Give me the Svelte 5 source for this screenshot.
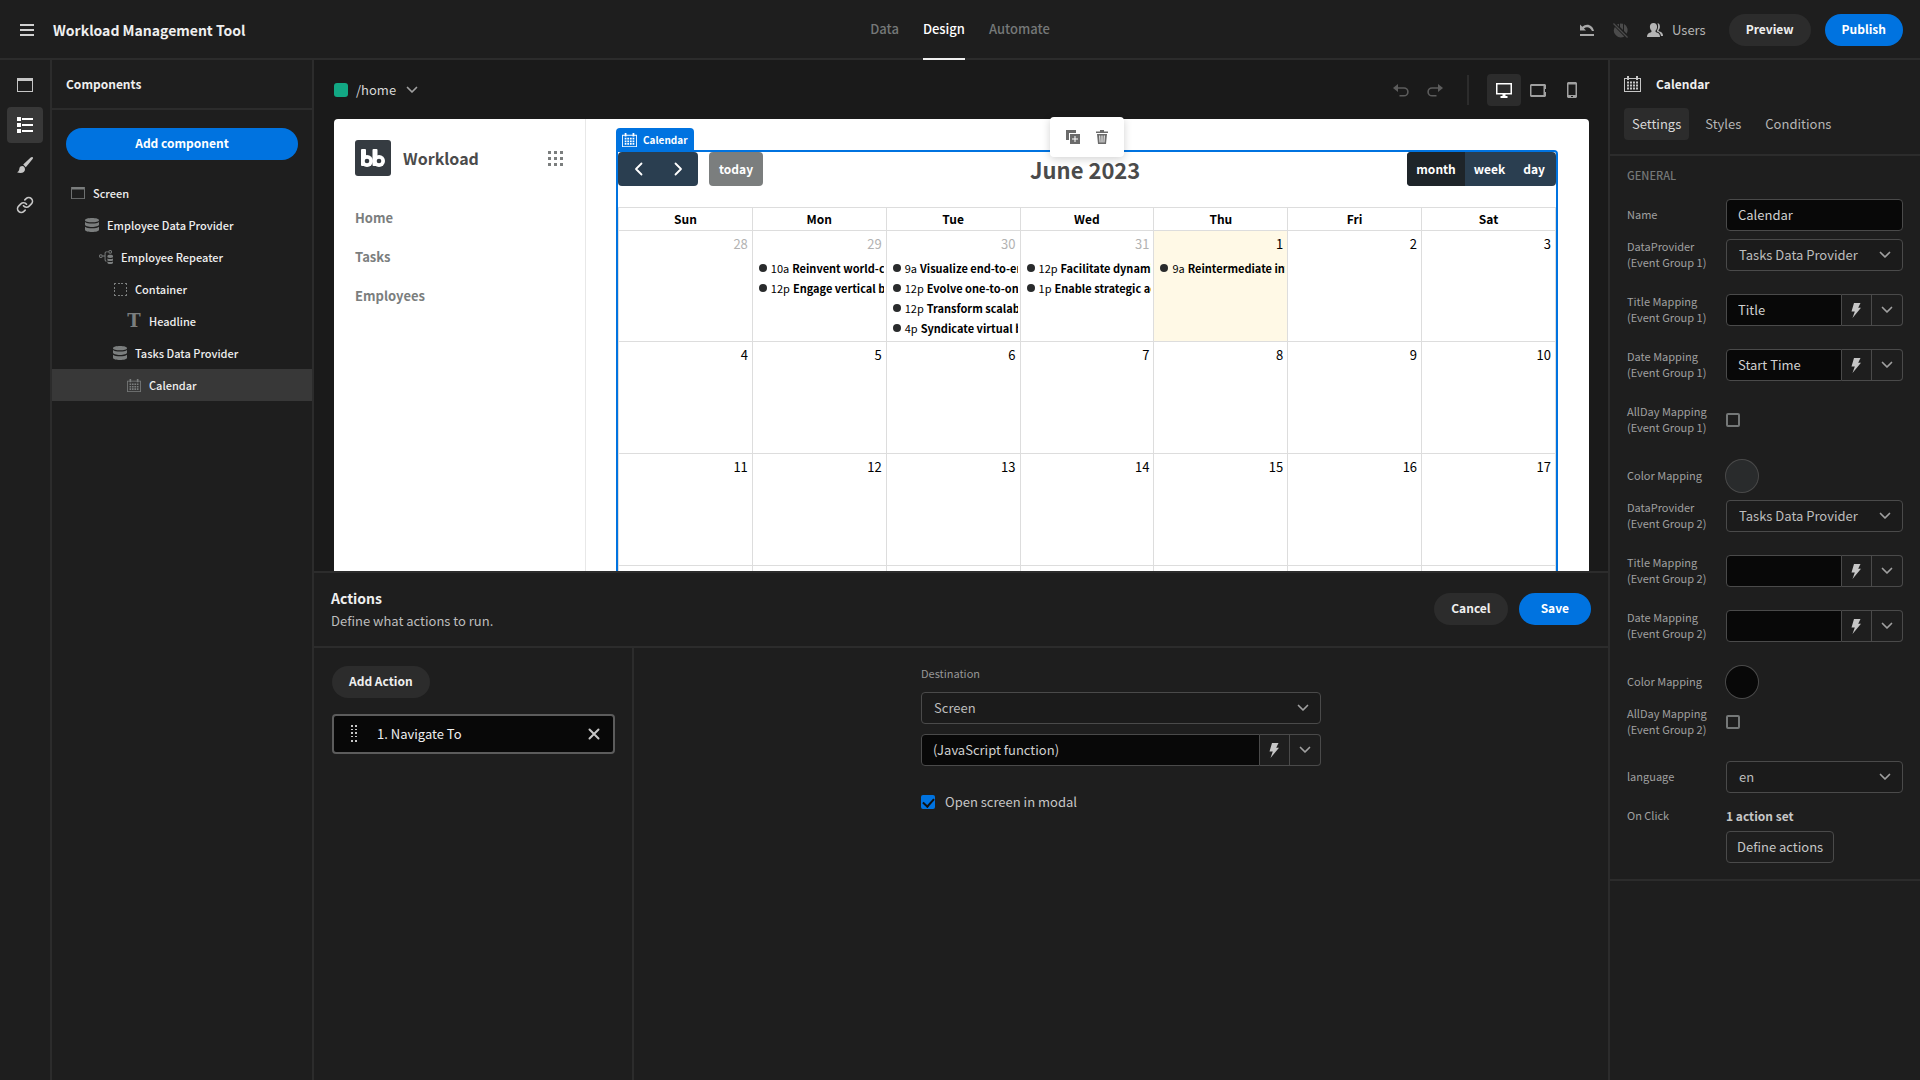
<script lang="ts">
  type Glyph = { w: number; h: number; d: string; stroke?: number };

  const glyphs: Record<string, Glyph> = {
    menu: { w: 14, h: 12, d: "M0 0h14v2H0zM0 5h14v2H0zM0 10h14v2H0z" },
    page: { w: 16, h: 14, d: "M0 0h16v14H0zM1 3v10h14V3z" },
    list: {
      w: 16,
      h: 16,
      d: "M0 0h4v4H0zM5 1h11v2H5zM0 6h4v4H0zM5 7h11v2H5zM0 12h4v4H0zM5 13h11v2H5z",
    },
    brush: {
      w: 16,
      h: 16,
      d: "M15.7.3c-.5-.5-1.3-.3-2 .2L6.2 7.6l2.6 2.6 6.6-7.9c.5-.7.8-1.5.3-2zM5.3 9.1c-1.8 0-2.9 1.3-3 3C2.2 13.7 1.4 14.8 0 15.3c1 .5 2.3.7 3.4.7 2.9 0 4.6-1.7 4.6-3.6 0-1.8-1.2-3.3-2.7-3.3z",
    },
    link: {
      w: 24,
      h: 24,
      stroke: 2.2,
      d: "M10 13a5 5 0 0 0 7.54.54l3-3a5 5 0 0 0-7.07-7.07l-1.72 1.71M14 11a5 5 0 0 0-7.54-.54l-3 3a5 5 0 0 0 7.07 7.07l1.71-1.71",
    },
    data: {
      w: 14,
      h: 14,
      d: "M7 0c3.9 0 7 .9 7 2.2S10.9 4.3 7 4.3 0 3.5 0 2.2 3.1 0 7 0zM0 4c1.2 1 4 1.5 7 1.5S12.8 5 14 4v2.8c0 1.2-3.1 2.2-7 2.2s-7-1-7-2.2zM0 8.7c1.2 1 4 1.5 7 1.5s5.8-.5 7-1.5v3c0 1.3-3.1 2.3-7 2.3s-7-1-7-2.3z",
    },
    repeater: {
      w: 15,
      h: 15,
      d: "M2 4.5a2 2 0 1 1 0 4 2 2 0 0 1 0-4zM2 5.5a1 1 0 1 0 0 2 1 1 0 0 0 0-2zM4 6h2V3.5C6 2.1 6.9 1.5 8 1.5h2v1H8c-.7 0-1 .3-1 1v7c0 .7.3 1 1 1v1c-1.1 0-2-.6-2-2V7H4zM12 0a2 2 0 1 1 0 4 2 2 0 0 1 0-4zM12 1a1 1 0 1 0 0 2 1 1 0 0 0 0-2zM9 6.5C9 5.7 10.3 5.2 12 5.2s3 .5 3 1.3v1.3c-1.5.9-4.5.9-6 0zM9 9c1.5.9 4.5.9 6 0v2.2c-1.5.9-4.5.9-6 0zM9 12.3c1.5.9 4.5.9 6 0v1.4c0 .8-1.3 1.3-3 1.3s-3-.5-3-1.3z",
    },
    container: {
      w: 13,
      h: 13,
      d: "M0 0h2v1H1v1H0zM4 0h2v1H4zM7 0h2v1H7zM11 0h2v2h-1V1h-1zM0 4h1v2H0zM0 7h1v2H0zM12 4h1v2h-1zM12 7h1v2h-1zM0 11h1v1h1v1H0zM4 12h2v1H4zM7 12h2v1H7zM12 11h1v2h-2v-1h1z",
    },
    calendar: {
      w: 17,
      h: 16,
      d: "M0 2h3V0h2v2h7V0h2v2h3v14H0zM1 3v12h15V3h-2v1h-2V3H5v1H3V3zM3 5.5h2v2H3zM6 5.5h2v2H6zM9 5.5h2v2H9zM12 5.5h2v2h-2zM3 8.5h2v2H3zM6 8.5h2v2H6zM9 8.5h2v2H9zM12 8.5h2v2h-2zM3 11.5h2v2H3zM6 11.5h2v2H6zM9 11.5h2v2H9zM12 11.5h2v2h-2z",
    },
    revert: {
      w: 14,
      h: 12,
      d: "M0 .5v6h6L3.9 4.4C6.6 2.2 10.4 3 12 7h2C12.9.9 6.5-1.4 2.3 2.8zM0 10h14v2H0z",
    },
    globeOff: {
      w: 15,
      h: 15,
      d: "M1.9 3.9l9.4 9.5A6.9 6.9 0 0 1 1.9 3.9zM4 1.6l2-.9v3zM7 .5l3 .2v6.4L7 4.1zM11 1.1a6.9 6.9 0 0 1 2.6 9.6L11 8.1zM0 .9L.9 0 15 14.1l-.9.9z",
    },
    users: {
      w: 16,
      h: 14,
      d: "M6.5 0c2.3 0 3.6 1.6 3.6 3.8 0 1.8-.8 3.3-1.6 4-.2.9.2 1.4 1.2 1.7 2.2.7 3.3 1.8 3.3 4.5H0c0-2.7 1.2-3.8 3.4-4.5 1-.3 1.3-.8 1.1-1.7-.8-.7-1.6-2.2-1.6-4C2.9 1.6 4.2 0 6.5 0zM10.5.2C12.2.3 13 1.8 12.9 3.7c0 1.6-.6 2.7-1.3 3.4-.2.9.1 1.3.9 1.5 2.3.7 3.5 1.7 3.5 4.4h-2c-.3-2.5-1.5-3.7-3.6-4.3-.5-.2-.7-.5-.6-1 1.5-2 1.7-5.5.7-7.5z",
    },
    desktop: {
      w: 16,
      h: 15,
      d: "M0 0h16v11.5H0zM1.5 1.5V10h13V1.5zM6.5 11.5h3V13h2v2h-7v-2h2z",
    },
    tablet: {
      w: 16,
      h: 13,
      d: "M1 0h14l1 1v4h-1v3h1v4l-1 1H1l-1-1V1zM1.5 2v9h12V2z",
    },
    phone: { w: 10, h: 16, d: "M1 0h8l1 1v14l-1 1H1l-1-1V1zM1.5 2.5V13h7V2.5zM4 14h2v1H4z" },
    undo: {
      w: 16,
      h: 13,
      d: "M5 0v3.2h6a4.7 4.7 0 0 1 0 9.4H6.5V11H11a3.1 3.1 0 0 0 0-6.2H5V8L0 4z",
    },
    redo: {
      w: 16,
      h: 13,
      d: "M11 0v3.2H5a4.7 4.7 0 0 0 0 9.4h4.5V11H5a3.1 3.1 0 0 1 0-6.2h6V8l5-4z",
    },
    duplicate: {
      w: 14,
      h: 14,
      d: "M0 0h10v3H3v7H0zM4 4h10v10H4zM8.5 6v2.5H6v1h2.5V12h1V9.5H12v-1H9.5V6z",
    },
    trash: {
      w: 12,
      h: 14,
      d: "M4 0h4v1.5h4V3H0V1.5h4zM1 4h10l-1 10H2zM3.2 5.5l.4 7h.9l-.3-7zM5.5 5.5v7h1v-7zM7.8 5.5l-.3 7h.9l.4-7z",
    },
    bolt: { w: 10, h: 15, d: "M3 0h6.5L7.2 4.8H10L1.5 15l2.3-6.5H.5z" },
    chevron: { w: 12, h: 8, stroke: 1.7, d: "M1.5 1.5L6 6l4.5-4.5" },
    left: { w: 9, h: 14, stroke: 1.8, d: "M7.5 1.5L2 7l5.5 5.5" },
    right: { w: 9, h: 14, stroke: 1.8, d: "M1.5 1.5L7 7l-5.5 5.5" },
    close: { w: 12, h: 12, stroke: 2, d: "M1.5 1.5l9 9M10.5 1.5l-9 9" },
    grip: {
      w: 6,
      h: 18,
      d: "M0 0h2v2H0zM4 0h2v2H4zM0 4h2v1H0zM4 4h2v1H4zM0 7h2v2H0zM4 7h2v2H4zM0 11h2v1H0zM4 11h2v1H4zM0 15h2v2H0zM4 15h2v2H4z",
    },
    apps: {
      w: 15,
      h: 15,
      d: "M0 0h3v3H0zM6 0h3v3H6zM12 0h3v3h-3zM0 6h3v3H0zM6 6h3v3H6zM12 6h3v3h-3zM0 12h3v3H0zM6 12h3v3H6zM12 12h3v3h-3z",
    },
  };

  const rail = [
    { icon: "page", label: "Screens", size: 16 },
    { icon: "list", label: "Components", size: 16 },
    { icon: "brush", label: "Theme", size: 16 },
    { icon: "link", label: "Navigation", size: 18 },
  ];

  const tree = [
    { label: "Screen", icon: "page", depth: 0 },
    { label: "Employee Data Provider", icon: "data", depth: 1 },
    { label: "Employee Repeater", icon: "repeater", depth: 2 },
    { label: "Container", icon: "container", depth: 3 },
    { label: "Headline", icon: "headline", depth: 4 },
    { label: "Tasks Data Provider", icon: "data", depth: 3 },
    { label: "Calendar", icon: "calendar", depth: 4 },
  ];

  const weekdays = ["Sun", "Mon", "Tue", "Wed", "Thu", "Fri", "Sat"];
  // 0 leaves a cell empty
  const weeks = [
    [28, 29, 30, 31, 1, 2, 3],
    [4, 5, 6, 7, 8, 9, 10],
    [11, 12, 13, 14, 15, 16, 17],
    [0, 0, 0, 0, 0, 0, 0],
  ];
  // events of the first week, by day number
  const events: Record<number, [string, string][]> = {
    29: [
      ["10a", "Reinvent world-class"],
      ["12p", "Engage vertical bandwidth"],
    ],
    30: [
      ["9a", "Visualize end-to-end"],
      ["12p", "Evolve one-to-one"],
      ["12p", "Transform scalable"],
      ["4p", "Syndicate virtual bandwidth"],
    ],
    31: [
      ["12p", "Facilitate dynamic"],
      ["1p", "Enable strategic action"],
    ],
    1: [["9a", "Reintermediate integrated"]],
  };

  type Setting = { id: string; kind: string; label: string; group?: number; value?: string };
  const settings: Setting[] = [
    { id: "name", kind: "text", label: "Name", value: "Calendar" },
    { id: "provider1", kind: "select", label: "DataProvider", group: 1, value: "Tasks Data Provider" },
    { id: "title1", kind: "binding", label: "Title Mapping", group: 1, value: "Title" },
    { id: "date1", kind: "binding", label: "Date Mapping", group: 1, value: "Start Time" },
    { id: "allday1", kind: "check", label: "AllDay Mapping", group: 1 },
    { id: "color1", kind: "color", label: "Color Mapping", value: "#292b2c" },
    { id: "provider2", kind: "select", label: "DataProvider", group: 2, value: "Tasks Data Provider" },
    { id: "title2", kind: "binding", label: "Title Mapping", group: 2, value: "" },
    { id: "date2", kind: "binding", label: "Date Mapping", group: 2, value: "" },
    { id: "color2", kind: "color", label: "Color Mapping", value: "#080808" },
    { id: "allday2", kind: "check", label: "AllDay Mapping", group: 2 },
    { id: "language", kind: "select", label: "language", value: "en" },
  ];

  let activeRail = $state("list");
  let selected = $state("Calendar");
  let device = $state("desktop");
  let tab = $state("Settings");
  let openInModal = $state(true);
</script>

{#snippet icon(name: string, size?: number)}
  {@const g = glyphs[name]}
  {@const w = size ?? g.w}
  <svg
    class="icon"
    class:line={g.stroke}
    width={w}
    height={Math.round((w * g.h) / g.w)}
    viewBox="0 0 {g.w} {g.h}"
    aria-hidden="true"
  >
    <path d={g.d} fill-rule="evenodd" stroke-width={g.stroke ?? 0} />
  </svg>
{/snippet}

{#snippet picker(id: string, value: string)}
  <div class="picker">
    <select {id}>
      <option>{value}</option>
    </select>
    {@render icon("chevron")}
  </div>
{/snippet}

{#snippet binding(id: string, value: string, label?: string)}
  <div class="binding">
    <input {id} type="text" {value} aria-label={label} />
    <button type="button" aria-label="Open bindings">{@render icon("bolt")}</button>
    <button type="button" aria-label="Show options">{@render icon("chevron")}</button>
  </div>
{/snippet}

<div class="app">
  <header class="top">
    <div class="top-left">
      <button type="button" aria-label="Menu">{@render icon("menu")}</button>
      <h1>Workload Management Tool</h1>
    </div>
    <nav class="top-tabs" aria-label="Sections">
      <a href="#data">Data</a>
      <a href="#design" class="active">Design</a>
      <a href="#automate">Automate</a>
    </nav>
    <div class="top-right">
      <button type="button" aria-label="Revert">{@render icon("revert")}</button>
      <button class="off" type="button" aria-label="Unpublish">{@render icon("globeOff")}</button>
      <button class="users" type="button">{@render icon("users")}Users</button>
      <div class="top-actions">
        <button class="pill" type="button">Preview</button>
        <button class="pill cta" type="button">Publish</button>
      </div>
    </div>
  </header>

  <div class="body">
    <nav class="rail" aria-label="Design">
      {#each rail as item (item.icon)}
        <button
          type="button"
          class:active={activeRail === item.icon}
          aria-label={item.label}
          onclick={() => (activeRail = item.icon)}
        >
          {@render icon(item.icon, item.size)}
        </button>
      {/each}
    </nav>

    <aside class="components">
      <h2>Components</h2>
      <button class="pill cta add" type="button">Add component</button>
      <ul>
        {#each tree as node}
          <li>
            <button
              type="button"
              class:selected={selected === node.label}
              style="padding-left: {18 + node.depth * 14}px"
              onclick={() => (selected = node.label)}
            >
              <span class="tree-icon">
                {#if node.icon === "headline"}
                  <svg class="icon" width="16" height="14" viewBox="0 0 16 14" aria-hidden="true">
                    <text x="8" y="13" text-anchor="middle">T</text>
                  </svg>
                {:else}
                  {@render icon(node.icon, node.icon === "container" ? 13 : 14)}
                {/if}
              </span>
              {node.label}
            </button>
          </li>
        {/each}
      </ul>
    </aside>

    <main>
      <div class="toolbar">
        <button class="route" type="button">
          <span class="role"></span>/home{@render icon("chevron")}
        </button>
        <div class="tools">
          <div class="history">
            <button type="button" aria-label="Undo">{@render icon("undo")}</button>
            <button type="button" aria-label="Redo">{@render icon("redo")}</button>
          </div>
          <div class="devices">
            {#each ["desktop", "tablet", "phone"] as name}
              <button
                type="button"
                class:active={device === name}
                aria-label={name}
                onclick={() => (device = name)}
              >
                {@render icon(name)}
              </button>
            {/each}
          </div>
        </div>
      </div>

      <div class="stage">
        <div class="canvas">
          <div class="side">
            <div class="brand">
              <svg class="logo" viewBox="0 0 36 36" aria-hidden="true">
                <rect width="36" height="36" rx="3" fill="#353b41" />
                <rect x="6" y="9" width="5" height="17" rx="1" />
                <rect x="17.5" y="9" width="5" height="17" rx="1" />
                <circle cx="12" cy="21" r="6" />
                <circle cx="24" cy="21" r="6" />
                <circle cx="12" cy="21" r="2.3" fill="#353b41" />
                <circle cx="24" cy="21" r="2.3" fill="#353b41" />
              </svg>
              <strong>Workload</strong>
              {@render icon("apps")}
            </div>
            <a href="#home">Home</a>
            <a href="#tasks">Tasks</a>
            <a href="#employees">Employees</a>
          </div>

          <div class="screen">
            <div class="selection">
              <span class="tag">{@render icon("calendar", 15)}Calendar</span>
              <div class="float">
                <button type="button" aria-label="Duplicate">{@render icon("duplicate")}</button>
                <button type="button" aria-label="Delete">{@render icon("trash")}</button>
              </div>
              <div class="cal-bar">
                <div class="cal-left">
                  <div class="group">
                    <button class="step" type="button" aria-label="Previous month">{@render icon("left")}</button>
                    <button class="step" type="button" aria-label="Next month">{@render icon("right")}</button>
                  </div>
                  <button class="today" type="button">today</button>
                </div>
                <h2>June 2023</h2>
                <div class="group views">
                  <button class="active" type="button">month</button>
                  <button type="button">week</button>
                  <button type="button">day</button>
                </div>
              </div>
              <table>
                <thead>
                  <tr>
                    {#each weekdays as day}<th scope="col">{day}</th>{/each}
                  </tr>
                </thead>
                <tbody>
                  {#each weeks as week, w}
                    <tr>
                      {#each week as day}
                        <td class:other={w === 0 && day > 7} class:now={w === 0 && day === 1}>
                          {#if day}<div class="num">{day}</div>{/if}
                          {#if w === 0 && events[day]}
                            {#each events[day] as [time, title]}
                              <div class="event"><i></i><span>{time}</span><b>{title}</b></div>
                            {/each}
                          {/if}
                        </td>
                      {/each}
                    </tr>
                  {/each}
                </tbody>
              </table>
            </div>
          </div>
        </div>
      </div>

      <section class="drawer" aria-labelledby="drawer-title">
        <header>
          <div>
            <h2 id="drawer-title">Actions</h2>
            <p>Define what actions to run.</p>
          </div>
          <div class="drawer-buttons">
            <button class="pill" type="button">Cancel</button>
            <button class="pill cta" type="button">Save</button>
          </div>
        </header>
        <div class="drawer-body">
          <div class="action-list">
            <button class="pill" type="button">Add Action</button>
            <div class="action">
              {@render icon("grip")}
              <span>1. Navigate To</span>
              <button type="button" aria-label="Remove action">{@render icon("close")}</button>
            </div>
          </div>
          <div class="action-form">
            <div class="form">
              <label for="destination">Destination</label>
              {@render picker("destination", "Screen")}
              {@render binding("url", "(JavaScript function)", "Screen URL")}
              <label class="check">
                <input type="checkbox" bind:checked={openInModal} />
                Open screen in modal
              </label>
            </div>
          </div>
        </div>
      </section>
    </main>

    <aside class="settings">
      <h2>{@render icon("calendar")}Calendar</h2>
      <div class="tabs" role="tablist">
        {#each ["Settings", "Styles", "Conditions"] as name}
          <button
            type="button"
            role="tab"
            aria-selected={tab === name}
            class:active={tab === name}
            onclick={() => (tab = name)}
          >
            {name}
          </button>
        {/each}
      </div>
      <div class="general">
        <h3>GENERAL</h3>
        {#each settings as s (s.id)}
          <div class="row" class:tall={s.group} class:swatch-row={s.kind === "color"}>
            <label for={s.id}>
              {s.label}{#if s.group}<br />(Event Group {s.group}){/if}
            </label>
            {#if s.kind === "text"}
              <input id={s.id} type="text" value={s.value} />
            {:else if s.kind === "select"}
              {@render picker(s.id, s.value ?? "")}
            {:else if s.kind === "binding"}
              {@render binding(s.id, s.value ?? "")}
            {:else if s.kind === "check"}
              <input id={s.id} type="checkbox" />
            {:else}
              <button id={s.id} class="swatch" type="button" aria-label={s.label} style="background: {s.value}"></button>
            {/if}
          </div>
        {/each}
        <div class="row">
          <label for="on-click">On Click</label>
          <strong>1 action set</strong>
          <button id="on-click" class="define" type="button">Define actions</button>
        </div>
      </div>
    </aside>
  </div>
</div>

<style>
  :global(body) {
    background: #1e1e1e;
  }
  .app {
    --bg: #1e1e1e;
    --deep: #1a1a1a;
    --line: #2c2c2c;
    --field: #080808;
    --edge: #4a4a4a;
    --blue: #0073e0;
    display: flex;
    flex-direction: column;
    height: 100vh;
    background: var(--bg);
    color: #efefef;
    font-family: "Noto Sans CJK SC", "Source Sans Pro", sans-serif;
    font-size: 13px;
    line-height: 16px;
  }
  .app * {
    box-sizing: border-box;
  }
  button,
  input,
  select {
    margin: 0;
    color: inherit;
    font: inherit;
  }
  button {
    display: flex;
    align-items: center;
    justify-content: center;
    padding: 0;
    border: 0;
    background: none;
    cursor: pointer;
  }
  h1,
  h2,
  h3,
  p,
  ul {
    margin: 0;
    padding: 0;
  }
  a {
    color: inherit;
    text-decoration: none;
  }
  .icon {
    display: block;
    flex: none;
    fill: currentColor;
  }
  .icon.line {
    fill: none;
    stroke: currentColor;
    stroke-linecap: round;
    stroke-linejoin: round;
  }
  .pill {
    height: 32px;
    padding: 0 17px 2px;
    border-radius: 16px;
    background: #2c2c2c;
    font-size: 12px;
    font-weight: 700;
  }
  .pill.cta {
    background: var(--blue);
    color: #fff;
  }

  .top {
    display: grid;
    grid-template-columns: 1fr auto 1fr;
    flex: none;
    height: 60px;
    border-bottom: 2px solid var(--line);
  }
  .top-left,
  .top-right,
  .top-actions {
    display: flex;
    align-items: center;
  }
  .top-left {
    gap: 19px;
    padding-left: 20px;
    color: #d0d0d0;
  }
  h1 {
    color: #efefef;
    font-size: 14px;
    font-weight: 700;
  }
  .top-tabs {
    display: flex;
    gap: 24px;
    color: #757878;
    font-weight: 500;
  }
  .top-tabs a {
    display: flex;
    align-items: center;
    height: 60px;
    border-bottom: 2px solid transparent;
  }
  .top-tabs .active {
    border-color: #efefef;
    color: #fff;
  }
  .top-right {
    justify-content: flex-end;
    gap: 19px;
    padding-right: 17px;
    color: #a8a8a8;
  }
  .off {
    color: #4b4b4b;
  }
  .users {
    gap: 9px;
    color: #b5b5b5;
  }
  .top-actions {
    gap: 14px;
    padding-left: 4px;
    color: #efefef;
  }

  .body {
    display: flex;
    flex: 1;
    min-height: 0;
  }
  .rail {
    display: flex;
    flex: none;
    flex-direction: column;
    align-items: center;
    gap: 4px;
    width: 52px;
    padding-top: 7px;
    border-right: 2px solid var(--line);
    color: #c6c6c6;
  }
  .rail button {
    width: 36px;
    height: 36px;
    border-radius: 4px;
  }
  .rail .active {
    background: #383838;
    color: #fff;
  }

  .components {
    flex: none;
    width: 262px;
    border-right: 2px solid var(--line);
  }
  .components h2 {
    height: 50px;
    padding: 16px 14px 0;
    border-bottom: 2px solid var(--line);
    font-size: 12px;
    font-weight: 700;
  }
  .add {
    width: calc(100% - 28px);
    margin: 18px 14px 17px;
  }
  .components ul {
    list-style: none;
  }
  .components li button {
    justify-content: flex-start;
    gap: 7px;
    width: 100%;
    height: 32px;
    font-size: 11px;
    font-weight: 500;
  }
  .components .selected {
    background: #383838;
  }
  .tree-icon {
    display: flex;
    justify-content: center;
    width: 16px;
    color: #7b7e7e;
  }
  .tree-icon .icon {
    overflow: visible;
  }
  .tree-icon text {
    font-family: "DejaVu Serif", serif;
    font-size: 18px;
    font-weight: 700;
  }

  main {
    display: flex;
    flex: 1;
    flex-direction: column;
    min-width: 0;
    background: var(--deep);
  }
  .toolbar {
    display: flex;
    flex: none;
    align-items: center;
    justify-content: space-between;
    height: 59px;
    padding: 1px 19px 0 20px;
  }
  .route {
    gap: 10px;
    color: #d8d8d8;
  }
  .route .icon {
    color: #a0a0a0;
  }
  .role {
    width: 14px;
    height: 14px;
    margin-right: -2px;
    border-radius: 3px;
    background: #12a884;
  }
  .tools,
  .devices,
  .history {
    display: flex;
    align-items: center;
  }
  .history {
    gap: 18px;
    height: 30px;
    margin-right: 18px;
    padding-right: 24px;
    border-right: 2px solid var(--line);
    color: #5c5c5c;
  }
  .devices {
    color: #a0a0a0;
  }
  .devices button {
    width: 34px;
    height: 32px;
    border-radius: 4px;
  }
  .devices .active {
    background: #2c2c2c;
    color: #fff;
  }

  .stage {
    flex: 1;
    min-height: 0;
    margin-top: -10px;
    padding: 10px 19px 0 20px;
    overflow: hidden;
  }
  .canvas {
    display: flex;
    height: 100%;
    border-radius: 4px 4px 0 0;
    background: #fff;
    color: #000;
  }
  .side {
    flex: none;
    width: 252px;
    padding: 21px 22px 21px 21px;
    border-right: 1px solid #e8e8e8;
    color: #7b7e7e;
  }
  .brand {
    display: flex;
    align-items: center;
    margin-bottom: 34px;
  }
  .brand strong {
    flex: 1;
    padding-left: 12px;
    color: #4b4b4b;
    font-size: 16px;
    font-weight: 700;
    line-height: 24px;
  }
  .logo {
    width: 36px;
    height: 36px;
    fill: #fff;
  }
  .side a {
    display: block;
    margin-bottom: 23px;
    font-weight: 700;
  }
  .screen {
    flex: 1;
    min-width: 0;
    padding: 31px 31px 0 30px;
  }
  .selection {
    position: relative;
    height: 560px;
    border: 2px solid var(--blue);
    border-radius: 0 4px 0 0;
  }
  .tag {
    position: absolute;
    top: -24px;
    left: -2px;
    display: flex;
    align-items: center;
    gap: 6px;
    height: 24px;
    padding: 0 6px;
    border-radius: 4px 4px 0 0;
    background: var(--blue);
    color: #fff;
    font-size: 10px;
    font-weight: 700;
  }
  .float {
    position: absolute;
    top: -35px;
    left: calc(50% - 37px);
    display: flex;
    align-items: center;
    justify-content: center;
    gap: 16px;
    width: 74px;
    height: 40px;
    border-radius: 4px;
    background: #fff;
    box-shadow: 0 2px 8px rgb(0 0 0 / 18%);
    color: #6b6b6b;
  }
  .cal-bar {
    display: flex;
    align-items: center;
    justify-content: space-between;
    margin-bottom: 21px;
    color: #fff;
  }
  .cal-left {
    display: flex;
    gap: 11px;
  }
  .cal-bar h2 {
    color: #4b4b4b;
    font-size: 22px;
    font-weight: 700;
    line-height: 34px;
  }
  .group {
    display: flex;
    overflow: hidden;
    border-radius: 4px;
    background: #2a3e50;
  }
  .cal-bar button {
    height: 34px;
    padding: 0 9px;
    font-size: 12px;
    font-weight: 700;
  }
  .cal-bar .views button:last-child {
    padding-right: 11px;
  }
  .cal-bar .step {
    width: 40px;
  }
  .cal-bar .active {
    background: #1e2429;
  }
  .cal-bar .today {
    padding: 0 10px;
    border-radius: 4px;
    background: #7b7e7e;
  }
  table {
    width: 100%;
    border-collapse: collapse;
    table-layout: fixed;
  }
  th,
  td {
    padding: 0;
    border: 1px solid #ddd;
  }
  th {
    height: 23px;
    font-size: 12px;
    font-weight: 700;
  }
  td {
    height: 112px;
    padding: 5px 2px 0 1px;
    vertical-align: top;
  }
  tr:first-child td {
    height: 111px;
  }
  .other .num {
    color: #b2b2b2;
  }
  .now {
    background: #fff9e6;
  }
  .num {
    padding-right: 2px;
    margin-bottom: 6px;
    text-align: right;
  }
  .event {
    display: flex;
    align-items: center;
    gap: 3px;
    height: 20px;
    padding-left: 5px;
    overflow: hidden;
    font-size: 11px;
    white-space: nowrap;
  }
  .event i {
    flex: none;
    width: 8px;
    height: 8px;
    margin-right: 1px;
    border-radius: 4px;
    background: #292b2c;
  }

  .drawer {
    display: flex;
    flex: none;
    flex-direction: column;
    height: calc(50% - 1px);
    border-top: 2px solid var(--line);
    background: var(--bg);
  }
  .drawer header {
    display: flex;
    align-items: center;
    justify-content: space-between;
    height: 75px;
    padding: 0 17px 2px;
    border-bottom: 2px solid var(--line);
  }
  .drawer h2 {
    margin-bottom: 5px;
    font-size: 14px;
    font-weight: 700;
    line-height: 20px;
  }
  .drawer p {
    color: #bdbdbd;
  }
  .drawer-buttons {
    display: flex;
    gap: 11px;
  }
  .drawer-buttons .cta {
    padding: 0 22px 2px;
  }
  .drawer-body {
    display: flex;
    flex: 1;
  }
  .action-list {
    flex: none;
    width: 320px;
    padding: 18px 17px 18px 18px;
    border-right: 2px solid var(--line);
  }
  .action {
    display: flex;
    align-items: center;
    height: 40px;
    margin-top: 16px;
    padding: 0 13px 0 17px;
    border: 2px solid #5c5c5c;
    border-radius: 4px;
    background: var(--field);
    color: #c6c6c6;
  }
  .action span {
    flex: 1;
    padding-left: 20px;
    color: #efefef;
  }
  .action-form {
    flex: 1;
    padding: 17px 18px;
  }
  .form {
    max-width: 400px;
    margin: 0 auto;
    color: #c6c6c6;
  }
  .form > label:first-child {
    display: block;
    margin-bottom: 11px;
    color: #969696;
    font-size: 11px;
  }
  .form .binding {
    margin: 10px 0 28px;
  }
  .check {
    display: flex;
    align-items: center;
    gap: 10px;
    width: fit-content;
  }

  .picker {
    position: relative;
  }
  .picker .icon {
    position: absolute;
    top: 12px;
    right: 12px;
    color: #a0a0a0;
    pointer-events: none;
  }
  select {
    width: 100%;
    height: 32px;
    padding: 0 30px 0 12px;
    border: 1px solid var(--edge);
    border-radius: 4px;
    background: #1b1b1b;
    color: #bdbdbd;
    appearance: none;
  }
  input[type="text"] {
    width: 100%;
    min-width: 0;
    height: 32px;
    padding: 0 11px 2px;
    border: 1px solid var(--edge);
    border-radius: 4px;
    background: var(--field);
    color: #d0d0d0;
  }
  .binding {
    display: flex;
  }
  .binding input[type="text"] {
    flex: 1;
    border-radius: 4px 0 0 4px;
  }
  .binding button {
    width: 30px;
    height: 32px;
    padding-right: 2px;
    border: 1px solid var(--edge);
    border-left: 0;
    color: #c6c6c6;
  }
  .binding button:last-child {
    width: 31px;
    padding-right: 0;
    border-radius: 0 4px 4px 0;
    color: #a0a0a0;
  }
  input[type="checkbox"] {
    position: relative;
    flex: none;
    width: 14px;
    height: 14px;
    border: 2px solid #757878;
    border-radius: 2px;
    appearance: none;
  }
  input[type="checkbox"]:checked {
    border-color: var(--blue);
    background: var(--blue);
  }
  input[type="checkbox"]:checked::after {
    position: absolute;
    top: -1px;
    left: 2px;
    width: 5px;
    height: 9px;
    border: solid #111;
    border-width: 0 2px 2px 0;
    transform: rotate(42deg);
    content: "";
  }

  .settings {
    flex: none;
    width: 312px;
    border-left: 2px solid var(--line);
  }
  .settings h2 {
    display: flex;
    align-items: center;
    gap: 15px;
    height: 48px;
    padding: 0 14px;
    font-size: 12px;
    font-weight: 700;
  }
  .settings h2 .icon {
    color: #c6c6c6;
  }
  .tabs {
    display: flex;
    gap: 8px;
    padding: 0 14px 14px;
    border-bottom: 2px solid var(--line);
    color: #b5b5b5;
  }
  .tabs button {
    height: 32px;
    padding: 0 8px;
    border-radius: 4px;
  }
  .tabs .active {
    background: #2c2c2c;
    color: #d8d8d8;
  }
  .general {
    padding: 11px 17px 16px;
    border-bottom: 2px solid var(--line);
    color: #c6c6c6;
  }
  h3 {
    margin-bottom: 16px;
    color: #757878;
    font-size: 11px;
    font-weight: 500;
  }
  .row {
    display: grid;
    grid-template-columns: 99px minmax(0, 1fr);
    align-items: center;
    min-height: 32px;
    margin-bottom: 8px;
  }
  .row:last-child {
    margin-bottom: 0;
  }
  .row.tall {
    margin-bottom: 23px;
  }
  .row > label {
    margin-top: -2px;
    color: #a0a0a0;
    font-size: 11px;
  }
  .row > strong {
    font-size: 12px;
    line-height: 30px;
  }
  .swatch-row {
    min-height: 33px;
  }
  .swatch {
    width: 32px;
    height: 32px;
    border-radius: 16px;
    box-shadow: 0 0 0 1px var(--edge);
  }
  .define {
    grid-column: 2;
    justify-self: start;
    height: 32px;
    padding: 0 10px 1px;
    border: 1px solid var(--edge);
    border-radius: 4px;
  }
</style>
